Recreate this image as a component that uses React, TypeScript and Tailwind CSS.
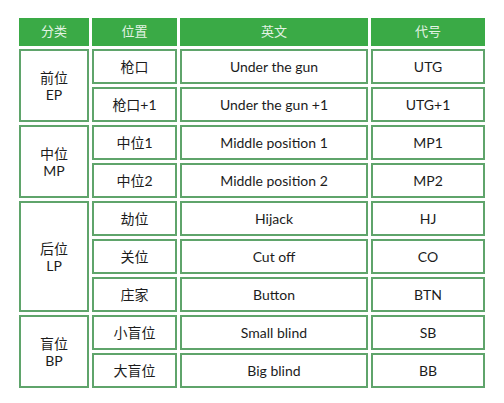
import React from "react";

const groups = [
  {
    name: "前位",
    abbr: "EP",
    rows: [
      ["枪口", "Under the gun", "UTG"],
      ["枪口+1", "Under the gun +1", "UTG+1"],
    ],
  },
  {
    name: "中位",
    abbr: "MP",
    rows: [
      ["中位1", "Middle position 1", "MP1"],
      ["中位2", "Middle position 2", "MP2"],
    ],
  },
  {
    name: "后位",
    abbr: "LP",
    rows: [
      ["劫位", "Hijack", "HJ"],
      ["关位", "Cut off", "CO"],
      ["庄家", "Button", "BTN"],
    ],
  },
  {
    name: "盲位",
    abbr: "BP",
    rows: [
      ["小盲位", "Small blind", "SB"],
      ["大盲位", "Big blind", "BB"],
    ],
  },
];

const cell =
  "border-2 border-[#5fa46b] bg-white flex items-center justify-center text-[14px] text-[#1c1c1c]";
const head =
  "bg-[#3aaa46] flex items-center justify-center text-[13px] text-[#e3f3e4]";

const rowSpanClass: Record<number, string> = {
  2: "row-span-2",
  3: "row-span-3",
};

export default function App() {
  let rowIndex = 2;
  const items: React.ReactNode[] = [];
  groups.forEach((g, gi) => {
    const start = rowIndex;
    items.push(
      <div
        key={`g${gi}`}
        className={`${cell} ${rowSpanClass[g.rows.length]} flex-col leading-[17px]`}
        style={{ gridRowStart: start, gridColumnStart: 1 }}
      >
        <span>{g.name}</span>
        <span>{g.abbr}</span>
      </div>
    );
    g.rows.forEach((r, ri) => {
      const row = start + ri;
      r.forEach((t, ci) => {
        items.push(
          <div
            key={`r${gi}-${ri}-${ci}`}
            className={cell}
            style={{ gridRowStart: row, gridColumnStart: ci + 2 }}
          >
            {t}
          </div>
        );
      });
    });
    rowIndex += g.rows.length;
  });

  return (
    <div
      className="w-[504px] h-[403px] bg-white pt-[18px] pl-[19px]"
      style={{ fontFamily: 'Lato, "Noto Sans CJK SC", sans-serif' }}
    >
      <div className="grid grid-cols-[70px_85px_188px_114px] grid-rows-[28px_repeat(9,35px)] gap-[3px]">
        <div className={head}>分类</div>
        <div className={head}>位置</div>
        <div className={head}>英文</div>
        <div className={head}>代号</div>
        {items}
      </div>
    </div>
  );
}
